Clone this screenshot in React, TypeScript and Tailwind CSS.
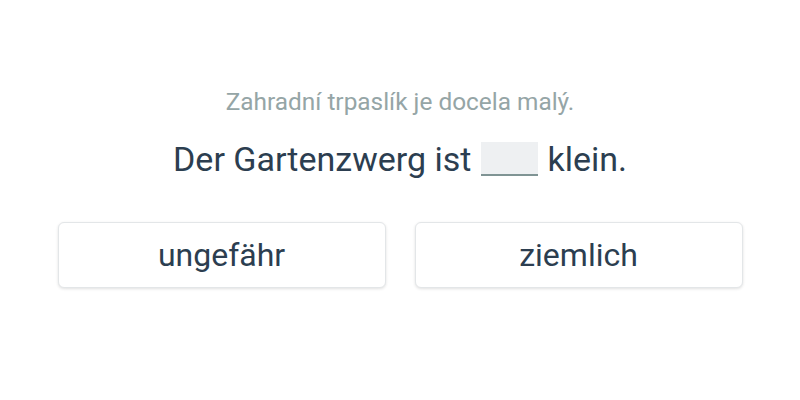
const options = ["ungefähr", "ziemlich"];

export default function App() {
  return (
    <div
      className="flex h-[400px] w-[800px] flex-col items-center bg-white"
      style={{ fontFamily: "Roboto, 'Noto Sans', sans-serif" }}
    >
      <p className="mt-[88px] text-[24.4px] leading-[28px] text-[#95a5a6]">
        Zahradní trpaslík je docela malý.
      </p>
      <p className="mt-[23px] flex items-end text-[34px] leading-[40px] text-[#2c3e50]">
        <span>Der Gartenzwerg ist</span>
        <span className="mr-[9px] mb-[3px] ml-[10px] inline-block h-[34px] w-[57px] border-b-2 border-[#7f9494] bg-[#eef0f2]" />
        <span>klein.</span>
      </p>
      <div className="mt-[43px] grid w-[685px] grid-cols-2 gap-[29px]">
        {options.map((o) => (
          <button
            key={o}
            className="h-[66px] rounded-md border border-[#e3e6e8] bg-white text-[32px] text-[#2c3e50] shadow-[0_1px_3px_rgba(0,0,0,0.12)]"
          >
            {o}
          </button>
        ))}
      </div>
    </div>
  );
}
